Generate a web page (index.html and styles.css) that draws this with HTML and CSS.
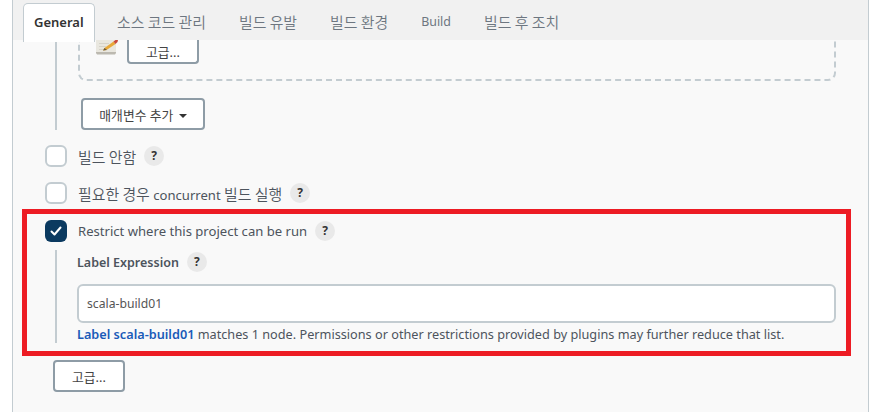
FILE: index.html
```html
<!DOCTYPE html>
<html lang="en">
<head>
    <meta charset="UTF-8">
    <meta name="viewport" content="width=device-width, initial-scale=1.0">
    <title>General</title>
    <link rel="stylesheet" href="styles.css">
</head>
<body>
    <div class="panel">
        <div class="tabs">
            <div class="tab active">General</div>
            <div class="tab ko">소스 코드 관리</div>
            <div class="tab ko">빌드 유발</div>
            <div class="tab ko">빌드 환경</div>
            <div class="tab tab-latin">Build</div>
            <div class="tab ko">빌드 후 조치</div>
        </div>
        <div class="params">
            <div class="param-box">
                <svg class="note-icon" width="24" height="15" viewBox="0 0 24 15">
                    <path d="M0 0h20v12.5L19 14H1l-1-1.5z" fill="#e9e7df"/>
                    <path d="M0 12h20v1L19 14.5H1L0 13z" fill="#bcb9b0"/>
                    <path d="M3 3.5h10M3 6.5h7M3 9.500h4" stroke="#d6d3c9" stroke-width="1"/>
                    <path d="M7 10.500l1.500-2.500 9-6.500 2 2.500-9 6z" fill="#e8a93a"/>
                    <path d="M7 10.500l1.500-2.500 2.500 2z" fill="#6b5a3c"/>
                    <path d="M17.500 1.500L19.500 0H22l-.5 2-2 2z" fill="#c9483c"/>
                </svg>
                <button class="btn btn-small">고급...</button>
            </div>
            <button class="btn btn-add">매개변수 추가 <span class="caret"></span></button>
        </div>
        <div class="check-row first">
            <span class="checkbox"></span>
            <span class="check-label ko">빌드 안함</span>
            <span class="help">?</span>
        </div>
        <div class="check-row second">
            <span class="checkbox"></span>
            <span class="check-label"><span class="ko">필요한 경우</span> concurrent <span class="ko">빌드 실행</span></span>
            <span class="help">?</span>
        </div>
        <div class="highlight">
            <div class="check-row">
                <span class="checkbox checked">
                    <svg width="22" height="22" viewBox="0 0 22 22"><path d="M6.500 11.500l3 3 6-7" fill="none" stroke="#fff" stroke-width="2" stroke-linecap="round" stroke-linejoin="round"/></svg>
                </span>
                <span class="check-label">Restrict where this project can be run</span>
                <span class="help">?</span>
            </div>
            <div class="nested">
                <div class="field-label">
                    <span>Label Expression</span>
                    <span class="help">?</span>
                </div>
                <input class="text-input" type="text" value="scala-build01">
                <div class="hint"><a href="#">Label scala-build01</a> matches 1 node. Permissions or other restrictions provided by plugins may further reduce that list.</div>
            </div>
        </div>
        <button class="btn btn-advanced">고급...</button>
    </div>
</body>
</html>
```

FILE: styles.css
```css
html, body {
    height: 412px;
    overflow: hidden;
}

body {
    margin: 0;
    background: #fff;
    color: #4d545d;
    font-family: "Noto Sans", "Noto Sans CJK KR", sans-serif;
    font-size: 13px;
}

.ko {
    font-size: 14.9px;
    font-family: "Noto Sans CJK KR", sans-serif;
    font-weight: 350;
}

.panel {
    box-sizing: border-box;
    width: 857px;
    height: 412px;
    margin-left: 12px;
    border-left: 1px solid #c3ccd1;
    border-right: 1px solid #c3ccd1;
    background: #f9f9f9;
}

.tabs {
    display: flex;
    gap: 12px;
    height: 40px;
    padding-left: 10px;
    background: #f1f1f1;
    box-sizing: border-box;
    padding-top: 3px;
}

.tab {
    padding: 0 10.5px;
    line-height: 36px;
    color: #6d7680;
}

.tab-latin {
    font-size: 12.4px;
    line-height: 38px;
}

.tab.ko {
    line-height: 37px;
}

.tab.active {
    height: 38px;
    margin-bottom: -1px;
    background: #fff;
    border: 1px solid #c3ccd1;
    border-bottom: none;
    border-radius: 5px 5px 0 0;
    padding: 0 10px;
    color: #333;
    font-weight: 600;
    z-index: 1;
}

.params {
    height: 90px;
    margin-left: 42px;
    padding-left: 21px;
    border-left: 2px solid #c3ccd1;
    box-sizing: border-box;
}

.param-box {
    display: flex;
    align-items: flex-start;
    gap: 7px;
    box-sizing: border-box;
    width: 758px;
    height: 41px;
    padding-left: 16px;
    border: 2px dashed #c3ccd1;
    border-top: none;
    border-radius: 0 0 8px 8px;
}

.btn {
    box-sizing: border-box;
    background: #fff;
    border: 2px solid #8e9ca6;
    border-radius: 4px;
    color: #444;
    font-family: "Noto Sans", "Noto Sans CJK KR", sans-serif;
    font-size: 12.8px;
    padding: 0;
}

.btn-small {
    width: 72px;
    height: 24px;
    border-top: none;
    border-radius: 0 0 4px 4px;
}

.btn-add {
    display: block;
    width: 124px;
    height: 32px;
    margin: 17px 0 0 3px;
}

.caret {
    display: inline-block;
    width: 0;
    height: 0;
    margin-left: 2px;
    vertical-align: 2px;
    border-left: 4px solid transparent;
    border-right: 4px solid transparent;
    border-top: 4px solid #333;
}

.check-row {
    display: flex;
    align-items: center;
    height: 22px;
}

.check-row.first {
    margin: 15px 0 0 32px;
}

.check-row.second {
    margin: 15px 0 0 32px;
}

.checkbox {
    box-sizing: border-box;
    width: 22px;
    height: 22px;
    flex: none;
    background: #fff;
    border: 2px solid #c3ccd1;
    border-radius: 6px;
}

.checkbox.checked {
    background: #0b3a60;
    border: none;
}

.checkbox svg {
    display: block;
}

.check-label {
    margin-left: 11px;
    font-size: 13.1px;
}

.check-label.ko {
    font-size: 14.9px;
}

.help {
    display: inline-block;
    width: 20px;
    height: 20px;
    margin-left: 8px;
    border-radius: 50%;
    background: #e9e9e9;
    color: #333;
    font-size: 12px;
    font-weight: 700;
    line-height: 20px;
    text-align: center;
}

.highlight {
    box-sizing: border-box;
    width: 829px;
    height: 147px;
    margin: 5px 0 0 9px;
    padding: 6px 0 0 18px;
    border: 5px solid #ed1c24;
}

.nested {
    margin: 8px 0 0 10px;
    padding-left: 20px;
    border-left: 2px solid #c3ccd1;
    height: 93px;
    box-sizing: border-box;
}

.field-label {
    display: flex;
    align-items: center;
    height: 24px;
    font-size: 12.5px;
    font-weight: 600;
    color: #4d545d;
}

.text-input {
    display: block;
    box-sizing: border-box;
    width: 759px;
    height: 39px;
    margin-top: 10px;
    padding: 0 8px;
    background: #fff;
    border: 2px solid #c3ccd1;
    border-radius: 6px;
    color: #555;
    font-family: inherit;
    font-size: 12.2px;
}

.hint {
    margin-top: 2px;
    font-size: 12.7px;
    line-height: 18px;
    white-space: nowrap;
}

.hint a {
    color: #1a5bb8;
    font-weight: 600;
    text-decoration: none;
}

.btn-advanced {
    display: block;
    width: 72px;
    height: 32px;
    margin: 4px 0 0 40px;
}
```
